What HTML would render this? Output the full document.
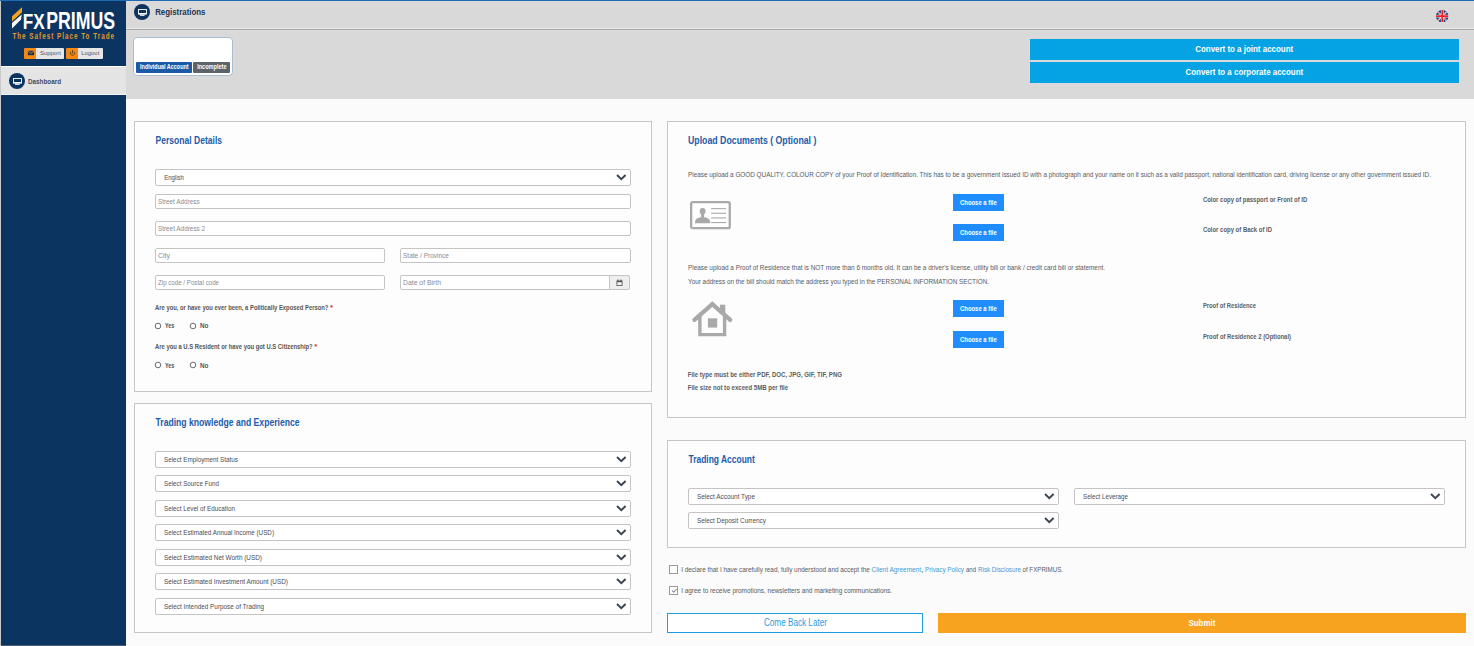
<!DOCTYPE html>
<html><head><meta charset="utf-8"><style>
html,body{margin:0;padding:0;}
body{width:1474px;height:646px;position:relative;overflow:hidden;background:#fbfbfb;font-family:"Liberation Sans", sans-serif;}
body>div,body>svg,body>span{position:absolute;}
.t{white-space:nowrap;line-height:1;transform-origin:0 0;}
</style></head><body>
<div style="left:0px;top:0px;width:1474px;height:646px;background:#fbfbfb"></div>
<div style="left:125px;top:0px;width:1349px;height:99px;background:#d9d9d9"></div>
<div style="left:125px;top:28px;width:1349px;height:1px;background:#e6e6e6"></div>
<div style="left:125px;top:29px;width:1349px;height:1px;background:#ababab"></div>
<div style="left:0px;top:0px;width:1474px;height:1px;background:#1f6bb4"></div>
<div style="left:0px;top:1px;width:1px;height:645px;background:#c8c8c8"></div>
<div style="left:1px;top:1px;width:124.5px;height:645px;background:#0c3461"></div>
<div style="left:1px;top:66px;width:124.5px;height:1px;background:#ffffff"></div>
<div style="left:1px;top:67px;width:124.5px;height:27px;background:#e4e4e4"></div>
<div style="left:1px;top:94px;width:124.5px;height:1px;background:#f4f4f4"></div>
<div style="left:125px;top:95px;width:1.2px;height:551px;background:#0c3461"></div>
<div style="left:1px;top:645px;width:125px;height:1px;background:#4d5d73"></div>
<svg style="left:0;top:0" width="125" height="45"><polygon points="22,7.2 22,12.3 12,21.6 12,16.3" fill="#f5a21f"/><polygon points="21.8,14.4 21,19.6 12,28.4 12,23.1" fill="#ffffff"/></svg>
<div style="left:24px;top:48px;width:12px;height:11px;background:#f7880f;border-radius:1px 0 0 1px"></div>
<div style="left:36px;top:48px;width:28px;height:11px;background:#e6e6e6;border-radius:0 1px 1px 0"></div>
<div style="left:66px;top:48px;width:12px;height:11px;background:#f7880f;border-radius:1px 0 0 1px"></div>
<div style="left:78px;top:48px;width:25px;height:11px;background:#e6e6e6;border-radius:0 1px 1px 0"></div>
<svg style="left:24px;top:48px" width="12" height="11"><rect x="3.9" y="2.8" width="6.1" height="4.4" fill="#0c3461"/><polyline points="3.9,3.2 6.95,5.3 10,3.2" stroke="#f7880f" stroke-width="0.8" fill="none"/></svg>
<svg style="left:66px;top:48px" width="12" height="11"><path d="M4.9,3.8 A2.1,2.1 0 1 0 8.1,3.8" stroke="#4a3f2a" stroke-width="0.9" fill="none"/><line x1="6.5" y1="2.1" x2="6.5" y2="5.3" stroke="#4a3f2a" stroke-width="0.9"/></svg>
<svg style="left:9px;top:72.8px" width="16" height="16"><circle cx="8" cy="8" r="8" fill="#0c3461"/><rect x="4" y="5" width="8.9" height="5.6" fill="#ffffff"/><rect x="4.9" y="5.9" width="7.1" height="3.1" fill="#0c3461"/><rect x="6" y="10.5" width="4.6" height="1.3" fill="#ffffff"/></svg>
<svg style="left:134px;top:4px" width="16" height="16"><circle cx="8" cy="8" r="8" fill="#0c3461"/><rect x="4" y="5" width="8.9" height="5.6" fill="#ffffff"/><rect x="4.9" y="5.9" width="7.1" height="3.1" fill="#0c3461"/><rect x="6" y="10.5" width="4.6" height="1.3" fill="#ffffff"/></svg>
<svg style="left:1436.3px;top:9.7px" width="12.4" height="12.4" viewBox="0 0 60 60"><defs><clipPath id="fc"><circle cx="30" cy="30" r="30"/></clipPath></defs><g clip-path="url(#fc)"><rect width="60" height="60" fill="#0d3c7e"/><path d="M0,0 L60,60 M60,0 L0,60" stroke="#fff" stroke-width="7"/><path d="M0,0 L60,60 M60,0 L0,60" stroke="#e0202a" stroke-width="3"/><path d="M30,0 V60 M0,30 H60" stroke="#fff" stroke-width="13"/><path d="M30,0 V60 M0,30 H60" stroke="#ee1c25" stroke-width="8"/></g></svg>
<div style="left:133px;top:37px;width:98px;height:37px;background:#ffffff;border:1px solid #a9bed3;border-radius:4px;box-sizing:content-box"></div>
<div style="left:136px;top:62px;width:56px;height:11px;background:#1c5aa6;border-radius:1px"></div>
<div style="left:193px;top:62px;width:37px;height:11px;background:#5d636b;border-radius:1px"></div>
<div style="left:1030px;top:39px;width:429px;height:21px;background:#05a2e4"></div>
<div style="left:1030px;top:62px;width:429px;height:21px;background:#05a2e4"></div>
<div style="left:134px;top:121px;width:516px;height:269px;background:#fdfdfd;border:1px solid #c6c6c6;box-sizing:content-box"></div>
<div style="left:134px;top:403px;width:516px;height:228px;background:#fdfdfd;border:1px solid #c6c6c6;box-sizing:content-box"></div>
<div style="left:667px;top:121px;width:797px;height:295px;background:#fdfdfd;border:1px solid #c6c6c6;box-sizing:content-box"></div>
<div style="left:667px;top:440px;width:797px;height:106px;background:#fdfdfd;border:1px solid #c6c6c6;box-sizing:content-box"></div>
<div style="left:155px;top:169px;width:474px;height:15px;background:#ffffff;border:1px solid #c4c4c4;border-radius:2px;box-sizing:content-box"></div>
<svg style="left:615.7px;top:174.2px" width="11" height="7"><polyline points="1,1 5.3,5.2 9.6,1" stroke="#3e4751" stroke-width="2" fill="none"/></svg>
<div style="left:155px;top:194px;width:474px;height:13px;background:#ffffff;border:1px solid #c4c4c4;border-radius:2px;box-sizing:content-box"></div>
<div style="left:155px;top:221px;width:474px;height:13px;background:#ffffff;border:1px solid #c4c4c4;border-radius:2px;box-sizing:content-box"></div>
<div style="left:155px;top:248px;width:228px;height:13px;background:#ffffff;border:1px solid #c4c4c4;border-radius:2px;box-sizing:content-box"></div>
<div style="left:400px;top:248px;width:229px;height:13px;background:#ffffff;border:1px solid #c4c4c4;border-radius:2px;box-sizing:content-box"></div>
<div style="left:155px;top:275px;width:228px;height:13px;background:#ffffff;border:1px solid #c4c4c4;border-radius:2px;box-sizing:content-box"></div>
<div style="left:400px;top:275px;width:218px;height:13px;background:#ffffff;border:1px solid #c4c4c4;border-radius:2px;box-sizing:content-box"></div>
<div style="left:609px;top:275px;width:19px;height:13px;background:#eeeeee;border:1px solid #c4c4c4;border-radius:0 2px 2px 0;box-sizing:content-box"></div>
<svg style="left:616px;top:279px" width="8" height="8"><rect x="0.5" y="1.5" width="6" height="5.5" fill="#555"/><rect x="1.3" y="3.2" width="4.4" height="3" fill="#eee"/><rect x="1.5" y="0.5" width="1" height="1.5" fill="#555"/><rect x="4.5" y="0.5" width="1" height="1.5" fill="#555"/></svg>
<svg style="left:154px;top:322px" width="8" height="8"><circle cx="4" cy="4" r="2.8" stroke="#505050" stroke-width="0.85" fill="#fff"/></svg>
<svg style="left:189px;top:322px" width="8" height="8"><circle cx="4" cy="4" r="2.8" stroke="#505050" stroke-width="0.85" fill="#fff"/></svg>
<svg style="left:154px;top:361px" width="8" height="8"><circle cx="4" cy="4" r="2.8" stroke="#505050" stroke-width="0.85" fill="#fff"/></svg>
<svg style="left:189px;top:361px" width="8" height="8"><circle cx="4" cy="4" r="2.8" stroke="#505050" stroke-width="0.85" fill="#fff"/></svg>
<div style="left:155px;top:451px;width:474px;height:15px;background:#ffffff;border:1px solid #c4c4c4;border-radius:2px;box-sizing:content-box"></div>
<svg style="left:615.7px;top:456.2px" width="11" height="7"><polyline points="1,1 5.3,5.2 9.6,1" stroke="#3e4751" stroke-width="2" fill="none"/></svg>
<div style="left:155px;top:475px;width:474px;height:15px;background:#ffffff;border:1px solid #c4c4c4;border-radius:2px;box-sizing:content-box"></div>
<svg style="left:615.7px;top:480.2px" width="11" height="7"><polyline points="1,1 5.3,5.2 9.6,1" stroke="#3e4751" stroke-width="2" fill="none"/></svg>
<div style="left:155px;top:500px;width:474px;height:15px;background:#ffffff;border:1px solid #c4c4c4;border-radius:2px;box-sizing:content-box"></div>
<svg style="left:615.7px;top:505.2px" width="11" height="7"><polyline points="1,1 5.3,5.2 9.6,1" stroke="#3e4751" stroke-width="2" fill="none"/></svg>
<div style="left:155px;top:524px;width:474px;height:15px;background:#ffffff;border:1px solid #c4c4c4;border-radius:2px;box-sizing:content-box"></div>
<svg style="left:615.7px;top:529.2px" width="11" height="7"><polyline points="1,1 5.3,5.2 9.6,1" stroke="#3e4751" stroke-width="2" fill="none"/></svg>
<div style="left:155px;top:549px;width:474px;height:15px;background:#ffffff;border:1px solid #c4c4c4;border-radius:2px;box-sizing:content-box"></div>
<svg style="left:615.7px;top:554.2px" width="11" height="7"><polyline points="1,1 5.3,5.2 9.6,1" stroke="#3e4751" stroke-width="2" fill="none"/></svg>
<div style="left:155px;top:573px;width:474px;height:15px;background:#ffffff;border:1px solid #c4c4c4;border-radius:2px;box-sizing:content-box"></div>
<svg style="left:615.7px;top:578.2px" width="11" height="7"><polyline points="1,1 5.3,5.2 9.6,1" stroke="#3e4751" stroke-width="2" fill="none"/></svg>
<div style="left:155px;top:598px;width:474px;height:15px;background:#ffffff;border:1px solid #c4c4c4;border-radius:2px;box-sizing:content-box"></div>
<svg style="left:615.7px;top:603.2px" width="11" height="7"><polyline points="1,1 5.3,5.2 9.6,1" stroke="#3e4751" stroke-width="2" fill="none"/></svg>
<svg style="left:690px;top:201px" width="41" height="29"><rect x="1.15" y="1.15" width="38.6" height="26" rx="1.5" stroke="#a9a9a9" stroke-width="2.3" fill="#fff"/>
<ellipse cx="12.6" cy="10.3" rx="2.9" ry="3.4" fill="#a9a9a9"/><path d="M4.9,22.2 C4.9,17.6 8,16.2 12.6,16.2 C17.2,16.2 20.3,17.6 20.3,22.2 Z" fill="#a9a9a9"/><rect x="11.1" y="12" width="3" height="5" fill="#a9a9a9"/>
<rect x="21.1" y="7.1" width="15" height="1.1" fill="#a9a9a9"/><rect x="21.1" y="11.7" width="15" height="1.1" fill="#a9a9a9"/><rect x="21.1" y="16.4" width="15" height="1.1" fill="#a9a9a9"/><rect x="21.1" y="21" width="15" height="1.1" fill="#a9a9a9"/></svg>
<svg style="left:690px;top:298px" width="45" height="40"><rect x="30" y="6.7" width="5.3" height="9" fill="#a9a9a9"/><polyline points="4.4,21.9 22.3,6.1 40.2,21.9" stroke="#a9a9a9" stroke-width="4.2" stroke-linecap="round" stroke-linejoin="miter" fill="none"/>
<polyline points="9.9,17 9.9,36.6 34.6,36.6 34.6,17" stroke="#a9a9a9" stroke-width="3.4" fill="none"/><rect x="17.9" y="20.3" width="9.3" height="9.3" fill="#a9a9a9"/></svg>
<div style="left:953px;top:194px;width:51px;height:17px;background:#1f8dfd"></div>
<div style="left:953px;top:224px;width:51px;height:17px;background:#1f8dfd"></div>
<div style="left:953px;top:300px;width:51px;height:17px;background:#1f8dfd"></div>
<div style="left:953px;top:331px;width:51px;height:17px;background:#1f8dfd"></div>
<div style="left:688px;top:488px;width:369px;height:15px;background:#ffffff;border:1px solid #c4c4c4;border-radius:2px;box-sizing:content-box"></div>
<svg style="left:1043.7px;top:493.2px" width="11" height="7"><polyline points="1,1 5.3,5.2 9.6,1" stroke="#3e4751" stroke-width="2" fill="none"/></svg>
<div style="left:1074px;top:488px;width:369px;height:15px;background:#ffffff;border:1px solid #c4c4c4;border-radius:2px;box-sizing:content-box"></div>
<svg style="left:1429.7px;top:493.2px" width="11" height="7"><polyline points="1,1 5.3,5.2 9.6,1" stroke="#3e4751" stroke-width="2" fill="none"/></svg>
<div style="left:688px;top:512px;width:369px;height:15px;background:#ffffff;border:1px solid #c4c4c4;border-radius:2px;box-sizing:content-box"></div>
<svg style="left:1043.7px;top:517.2px" width="11" height="7"><polyline points="1,1 5.3,5.2 9.6,1" stroke="#3e4751" stroke-width="2" fill="none"/></svg>
<div style="left:669px;top:565px;width:7px;height:7px;background:#fff;border:1px solid #999999;box-sizing:content-box"></div>
<div style="left:669px;top:586px;width:7px;height:7px;background:#fff;border:1px solid #999999;box-sizing:content-box"></div>
<svg style="left:669px;top:586px" width="9" height="9"><polyline points="2.9,4.3 4.8,6.1 7.6,3.0" stroke="#8f8f9c" stroke-width="1.1" fill="none"/></svg>
<div style="left:667px;top:613px;width:254px;height:18px;background:#fff;border:1px solid #1a9fe3;box-sizing:content-box"></div>
<div style="left:938px;top:613px;width:528px;height:20px;background:#f7a31f"></div>
<svg style="left:0;top:0" width="1474" height="646" font-family="Liberation Sans">
<text x="22.80" y="29.00" font-size="21.221" font-weight="bold" fill="#ffffff" textLength="21.90" lengthAdjust="spacingAndGlyphs">FX</text>
<text x="46.20" y="29.00" font-size="23.837" font-weight="bold" fill="#ffffff" textLength="68.90" lengthAdjust="spacingAndGlyphs">PRIMUS</text>
<text x="12.40" y="39.00" font-size="8.576" font-weight="bold" fill="#e39a2b" textLength="102.60" lengthAdjust="spacingAndGlyphs" letter-spacing="1.4">The Safest Place To Trade</text>
<text x="40.00" y="55.00" font-size="6.105" fill="#4c5472" textLength="20.80" lengthAdjust="spacingAndGlyphs">Support</text>
<text x="81.20" y="55.00" font-size="6.105" fill="#4c5472" textLength="18.10" lengthAdjust="spacingAndGlyphs">Logout</text>
<text x="28.00" y="84.00" font-size="6.977" font-weight="bold" fill="#434a5c" textLength="33.00" lengthAdjust="spacingAndGlyphs">Dashboard</text>
<text x="155.20" y="15.00" font-size="8.721" font-weight="bold" fill="#1d3354" textLength="50.30" lengthAdjust="spacingAndGlyphs">Registrations</text>
<text x="140.10" y="69.00" font-size="7.703" font-weight="bold" fill="#ffffff" textLength="48.50" lengthAdjust="spacingAndGlyphs">Individual Account</text>
<text x="197.20" y="69.00" font-size="7.703" font-weight="bold" fill="#ffffff" textLength="29.30" lengthAdjust="spacingAndGlyphs">Incomplete</text>
<text x="1195.20" y="52.40" font-size="9.593" font-weight="bold" fill="#ffffff" textLength="98.00" lengthAdjust="spacingAndGlyphs">Convert to a joint account</text>
<text x="1185.50" y="74.90" font-size="9.593" font-weight="bold" fill="#ffffff" textLength="117.70" lengthAdjust="spacingAndGlyphs">Convert to a corporate account</text>
<text x="155.60" y="144.00" font-size="10.174" font-weight="bold" fill="#1c5cab" textLength="66.40" lengthAdjust="spacingAndGlyphs">Personal Details</text>
<text x="164.20" y="180.10" font-size="7.122" fill="#4a4d55" textLength="19.70" lengthAdjust="spacingAndGlyphs">English</text>
<text x="157.90" y="203.90" font-size="6.977" fill="#888c93" textLength="41.80" lengthAdjust="spacingAndGlyphs">Street Address</text>
<text x="157.90" y="230.90" font-size="6.977" fill="#888c93" textLength="47.20" lengthAdjust="spacingAndGlyphs">Street Address 2</text>
<text x="158.00" y="257.90" font-size="6.977" fill="#888c93" textLength="12.00" lengthAdjust="spacingAndGlyphs">City</text>
<text x="403.00" y="257.90" font-size="6.977" fill="#888c93" textLength="46.00" lengthAdjust="spacingAndGlyphs">State / Province</text>
<text x="158.00" y="284.90" font-size="6.977" fill="#888c93" textLength="61.00" lengthAdjust="spacingAndGlyphs">Zip code / Postal code</text>
<text x="403.00" y="284.90" font-size="6.977" fill="#888c93" textLength="38.00" lengthAdjust="spacingAndGlyphs">Date of Birth</text>
<text x="155.00" y="310.00" font-size="7.122" font-weight="bold" fill="#555555" textLength="173.40" lengthAdjust="spacingAndGlyphs">Are you, or have you ever been, a Politically Exposed Person?</text>
<text x="330.00" y="310.00" font-size="7.122" font-weight="bold" fill="#d9302c" textLength="3.00" lengthAdjust="spacingAndGlyphs">*</text>
<text x="165.00" y="328.30" font-size="6.686" font-weight="bold" fill="#555555" textLength="9.40" lengthAdjust="spacingAndGlyphs">Yes</text>
<text x="200.00" y="328.30" font-size="6.686" font-weight="bold" fill="#555555" textLength="8.50" lengthAdjust="spacingAndGlyphs">No</text>
<text x="155.00" y="349.20" font-size="7.122" font-weight="bold" fill="#555555" textLength="157.70" lengthAdjust="spacingAndGlyphs">Are you a U.S Resident or have you got U.S Citizenship?</text>
<text x="314.20" y="349.20" font-size="7.122" font-weight="bold" fill="#d9302c" textLength="3.00" lengthAdjust="spacingAndGlyphs">*</text>
<text x="165.00" y="368.00" font-size="6.686" font-weight="bold" fill="#555555" textLength="9.40" lengthAdjust="spacingAndGlyphs">Yes</text>
<text x="200.00" y="368.00" font-size="6.686" font-weight="bold" fill="#555555" textLength="8.50" lengthAdjust="spacingAndGlyphs">No</text>
<text x="155.50" y="426.00" font-size="10.174" font-weight="bold" fill="#1c5cab" textLength="144.10" lengthAdjust="spacingAndGlyphs">Trading knowledge and Experience</text>
<text x="164.00" y="462.10" font-size="7.122" fill="#4a4d55" textLength="74.00" lengthAdjust="spacingAndGlyphs">Select Employment Status</text>
<text x="164.00" y="486.10" font-size="7.122" fill="#4a4d55" textLength="55.00" lengthAdjust="spacingAndGlyphs">Select Source Fund</text>
<text x="164.00" y="511.10" font-size="7.122" fill="#4a4d55" textLength="71.00" lengthAdjust="spacingAndGlyphs">Select Level of Education</text>
<text x="164.00" y="535.10" font-size="7.122" fill="#4a4d55" textLength="110.00" lengthAdjust="spacingAndGlyphs">Select Estimated Annual Income (USD)</text>
<text x="164.00" y="560.10" font-size="7.122" fill="#4a4d55" textLength="98.00" lengthAdjust="spacingAndGlyphs">Select Estimated Net Worth (USD)</text>
<text x="164.00" y="584.10" font-size="7.122" fill="#4a4d55" textLength="124.00" lengthAdjust="spacingAndGlyphs">Select Estimated Investment Amount (USD)</text>
<text x="164.00" y="609.10" font-size="7.122" fill="#4a4d55" textLength="100.00" lengthAdjust="spacingAndGlyphs">Select Intended Purpose of Trading</text>
<text x="688.00" y="144.00" font-size="10.174" font-weight="bold" fill="#1c5cab" textLength="128.40" lengthAdjust="spacingAndGlyphs">Upload Documents ( Optional )</text>
<text x="688.00" y="176.70" font-size="6.686" fill="#555a62" textLength="743.00" lengthAdjust="spacingAndGlyphs">Please upload a GOOD QUALITY, COLOUR COPY of your Proof of Identification. This has to be a government issued ID with a photograph and your name on it such as a valid passport, national identification card, driving license or any other government issued ID.</text>
<text x="960.00" y="204.80" font-size="6.686" font-weight="bold" fill="#ffffff" textLength="36.80" lengthAdjust="spacingAndGlyphs">Choose a file</text>
<text x="960.00" y="234.80" font-size="6.686" font-weight="bold" fill="#ffffff" textLength="36.80" lengthAdjust="spacingAndGlyphs">Choose a file</text>
<text x="960.00" y="310.80" font-size="6.686" font-weight="bold" fill="#ffffff" textLength="36.80" lengthAdjust="spacingAndGlyphs">Choose a file</text>
<text x="960.00" y="341.80" font-size="6.686" font-weight="bold" fill="#ffffff" textLength="36.80" lengthAdjust="spacingAndGlyphs">Choose a file</text>
<text x="1202.90" y="202.10" font-size="6.831" font-weight="bold" fill="#5a5d63" textLength="104.40" lengthAdjust="spacingAndGlyphs">Color copy of passport or Front of ID</text>
<text x="1202.90" y="231.80" font-size="6.831" font-weight="bold" fill="#5a5d63" textLength="69.10" lengthAdjust="spacingAndGlyphs">Color copy of Back of ID</text>
<text x="1202.90" y="307.80" font-size="6.831" font-weight="bold" fill="#5a5d63" textLength="53.10" lengthAdjust="spacingAndGlyphs">Proof of Residence</text>
<text x="1202.90" y="338.80" font-size="6.831" font-weight="bold" fill="#5a5d63" textLength="88.10" lengthAdjust="spacingAndGlyphs">Proof of Residence 2 (Optional)</text>
<text x="688.00" y="270.00" font-size="6.686" fill="#555a62" textLength="417.00" lengthAdjust="spacingAndGlyphs">Please upload a Proof of Residence that is NOT more than 6 months old. It can be a driver's license, utility bill or bank / credit card bill or statement.</text>
<text x="688.00" y="283.80" font-size="6.686" fill="#555a62" textLength="301.00" lengthAdjust="spacingAndGlyphs">Your address on the bill should match the address you typed in the PERSONAL INFORMATION SECTION.</text>
<text x="687.70" y="377.10" font-size="6.831" font-weight="bold" fill="#5a5d63" textLength="154.30" lengthAdjust="spacingAndGlyphs">File type must be either PDF, DOC, JPG, GIF, TIF, PNG</text>
<text x="687.70" y="390.10" font-size="6.831" font-weight="bold" fill="#5a5d63" textLength="100.50" lengthAdjust="spacingAndGlyphs">File size not to exceed 5MB per file</text>
<text x="688.50" y="463.00" font-size="10.174" font-weight="bold" fill="#1c5cab" textLength="66.30" lengthAdjust="spacingAndGlyphs">Trading Account</text>
<text x="697.00" y="499.10" font-size="7.122" fill="#4a4d55" textLength="58.00" lengthAdjust="spacingAndGlyphs">Select Account Type</text>
<text x="1083.00" y="499.10" font-size="7.122" fill="#4a4d55" textLength="45.00" lengthAdjust="spacingAndGlyphs">Select Leverage</text>
<text x="697.00" y="523.10" font-size="7.122" fill="#4a4d55" textLength="69.00" lengthAdjust="spacingAndGlyphs">Select Deposit Currency</text>
<text x="681.20" y="572.10" font-size="6.686" fill="#555a62" textLength="188.60" lengthAdjust="spacingAndGlyphs">I declare that I have carefully read, fully understood and accept the</text>
<text x="871.50" y="572.10" font-size="6.686" fill="#3d9ad8" textLength="49.50" lengthAdjust="spacingAndGlyphs">Client Agreement</text>
<text x="921.00" y="572.10" font-size="6.686" fill="#555a62" textLength="2.50" lengthAdjust="spacingAndGlyphs">,</text>
<text x="925.00" y="572.10" font-size="6.686" fill="#3d9ad8" textLength="39.00" lengthAdjust="spacingAndGlyphs">Privacy Policy</text>
<text x="966.00" y="572.10" font-size="6.686" fill="#555a62" textLength="10.00" lengthAdjust="spacingAndGlyphs">and</text>
<text x="978.00" y="572.10" font-size="6.686" fill="#3d9ad8" textLength="43.00" lengthAdjust="spacingAndGlyphs">Risk Disclosure</text>
<text x="1022.50" y="572.10" font-size="6.686" fill="#555a62" textLength="40.50" lengthAdjust="spacingAndGlyphs">of FXPRIMUS.</text>
<text x="681.20" y="592.80" font-size="6.686" fill="#555a62" textLength="210.80" lengthAdjust="spacingAndGlyphs">I agree to receive promotions, newsletters and marketing communications.</text>
<text x="763.90" y="626.00" font-size="10.029" fill="#1a9fe3" textLength="63.10" lengthAdjust="spacingAndGlyphs">Come Back Later</text>
<text x="1188.50" y="626.00" font-size="9.884" font-weight="bold" fill="#ffffff" textLength="26.80" lengthAdjust="spacingAndGlyphs">Submit</text>
</svg>
</body></html>
